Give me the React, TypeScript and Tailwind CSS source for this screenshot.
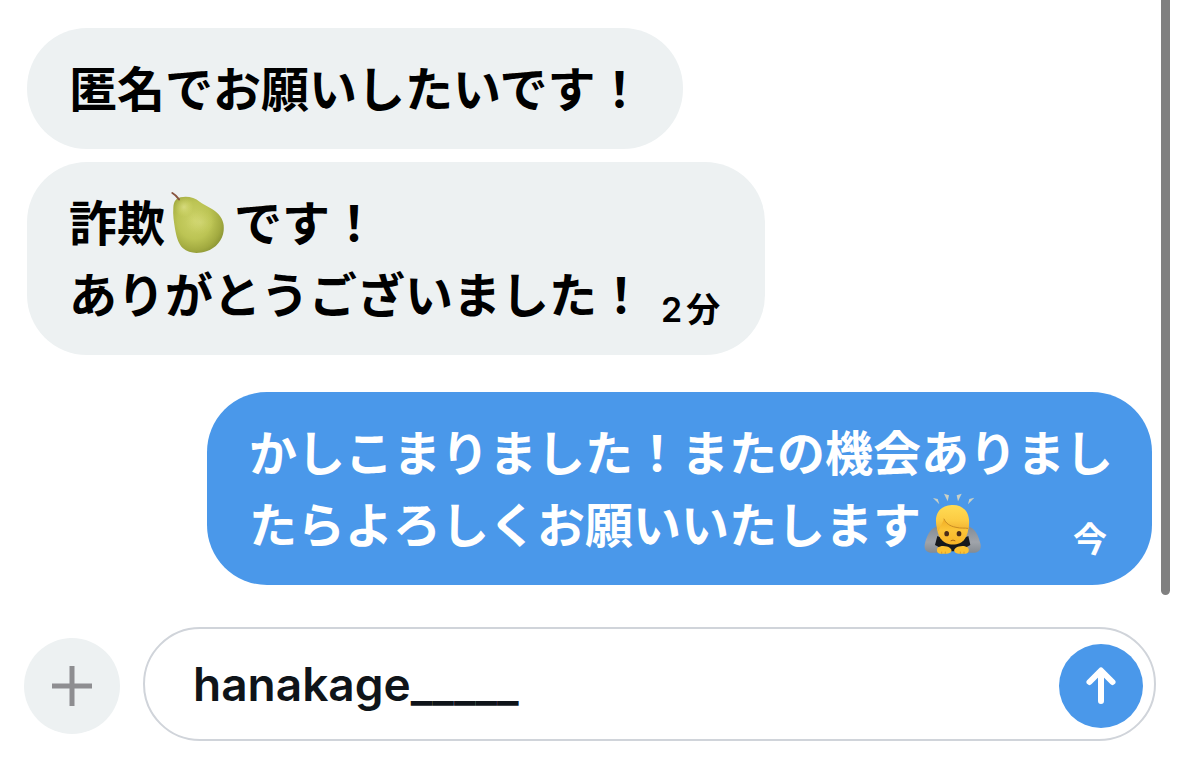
import React, { useState } from 'react';

// --- Emoji drawings ---

const PearEmoji = () => (
  <svg role="img" aria-label="pear" viewBox="30 15 171 192" className="-mt-1.5 mr-[7px] mb-1.5 ml-[5px] inline-block h-16 w-[57px] align-middle">
    <defs>
      <radialGradient id="pearBody" cx="0.42" cy="0.42" r="0.66">
        <stop offset="0" stopColor="#ccd269" />
        <stop offset="0.5" stopColor="#bcc454" />
        <stop offset="0.8" stopColor="#a2aa40" />
        <stop offset="1" stopColor="#848f32" />
      </radialGradient>
      <radialGradient id="pearShine" cx="0.5" cy="0.5" r="0.5">
        <stop offset="0" stopColor="#e6e89a" stopOpacity="0.6" />
        <stop offset="1" stopColor="#dce070" stopOpacity="0" />
      </radialGradient>
    </defs>
    <path
      d="M62 37C82 32 104 38 119 50C136 62 155 68 171 83C186 97 194 114 191 137C188 165 168 189 139 199C115 207 86 206 69 190C54 175 49 154 45 131C42 111 38 91 40 67C41 50 48 40 62 37Z"
      fill="url(#pearBody)"
    />
    <ellipse cx="72" cy="66" rx="29" ry="30" fill="url(#pearShine)" />
    <ellipse cx="121" cy="112" rx="44" ry="36" fill="url(#pearShine)" opacity="0.5" />
    <path d="M37 24C46 29 51 35 57 43" fill="none" stroke="#87543f" strokeWidth="6" strokeLinecap="round" />
  </svg>
);

const BowEmoji = () => (
  <svg role="img" aria-label="person bowing" viewBox="38 25 174 188" className="-mt-1.5 mr-[5px] mb-1.5 ml-[3px] inline-block h-16 w-[58px] align-middle">
    <defs>
      <linearGradient id="bowHair" x1="0" y1="0" x2="0" y2="1">
        <stop offset="0" stopColor="#ffdc55" />
        <stop offset="0.6" stopColor="#fccb43" />
        <stop offset="1" stopColor="#f0b030" />
      </linearGradient>
      <linearGradient id="bowFace" x1="0" y1="0" x2="0" y2="1">
        <stop offset="0" stopColor="#eda51c" />
        <stop offset="0.5" stopColor="#fbc438" />
        <stop offset="1" stopColor="#f7b325" />
      </linearGradient>
      <linearGradient id="bowSleeve" x1="0" y1="0" x2="0" y2="1">
        <stop offset="0" stopColor="#828b96" />
        <stop offset="0.6" stopColor="#a0a4aa" />
        <stop offset="1" stopColor="#858b92" />
      </linearGradient>
    </defs>
    <g fill="#ccd1c4">
      <path d="M65 41L79 44L84 60Z" />
      <path d="M98 28L113 33L109 51Z" />
      <path d="M136 33L151 28L140 51Z" />
      <path d="M174 44L189 40L170 60Z" />
    </g>
    <path d="M80 125C58 131 47 150 40 181C38 201 50 206 69 205L96 204L112 160Z" fill="url(#bowSleeve)" />
    <path d="M168 125C190 131 201 150 208 181C210 201 198 206 179 205L152 204L136 160Z" fill="url(#bowSleeve)" />
    <path d="M78 155C92 165 157 165 171 155L177 182L143 201H106L71 182Z" fill="#17191c" />
    <path d="M76 112C75 146 86 168 105 177C116 182 133 182 145 177C164 168 173 144 172 112C160 84 88 84 76 112Z" fill="url(#bowFace)" />
    <path
      d="M77 130C66 92 84 64 121 62C160 60 181 90 171 134C164 131 150 133 134 129C114 125 104 117 98 104C94 116 87 124 82 140C79 138 78 134 77 130Z"
      fill="url(#bowHair)"
    />
    <path d="M98 104C104 117 114 125 134 129C150 133 160 130 169 132" fill="none" stroke="#c98d24" strokeWidth="3" strokeLinecap="round" />
    <g fill="#4b2c18">
      <ellipse cx="106" cy="148" rx="7" ry="8" />
      <ellipse cx="143" cy="148" rx="7" ry="8" />
    </g>
    <path d="M119 169Q125 165 131 169" fill="none" stroke="#a86516" strokeWidth="3" strokeLinecap="round" />
    <path d="M79 190C88 183 106 184 116 191C125 198 120 208 106 208H85C76 206 75 195 79 190Z" fill="#fcc232" />
    <path d="M170 190C161 183 143 184 133 191C124 198 129 208 143 208H164C173 206 174 195 170 190Z" fill="#fcc232" />
    <path d="M91 202V208M102 202V208M147 202V208M158 202V208" stroke="#d38a1d" strokeWidth="2" />
  </svg>
);

// --- Message bubble ---

type BubbleProps = {
  children: React.ReactNode;
  own?: boolean;
};

const Bubble = ({ children, own = false }: BubbleProps) => (
  <li
    className={`w-fit rounded-[60px] pt-[26px] pr-[39px] pb-[23px] pl-[42px] ${
      own ? 'mt-6 self-end bg-[#4a98ea] text-white' : 'bg-[#edf1f2] text-black'
    }`}
  >
    <div className="flex items-end text-[48px] leading-[72px] font-bold">{children}</div>
  </li>
);

// --- Chat screen ---

const App = () => {
  const [draft, setDraft] = useState('hanakage_____');

  return (
    <main className="min-h-screen bg-white font-['Inter','Noto_Sans_CJK_JP',sans-serif]" lang="ja">
      <section className="flex gap-[9px] pr-[9px] pl-[27px]">
        <ol className="flex flex-1 flex-col gap-[13px] pt-7 pb-[10px]">
          <Bubble>
            <p>匿名でお願いしたいです！</p>
          </Bubble>
          <Bubble>
            <p>
              詐欺
              <PearEmoji />
              です！
              <br />
              ありがとうございました！
            </p>
            <time className="mr-[6px] ml-4 flex gap-1 text-[34px] leading-[44px] font-semibold">
              <span>2</span>
              <span>分</span>
            </time>
          </Bubble>
          <Bubble own>
            <p>
              かしこまりました！またの機会ありまし
              <br />
              たらよろしくお願いいたします
              <BowEmoji />
              <time className="float-right mt-7 mr-[6px] text-[34px] leading-[44px] font-semibold">今</time>
            </p>
          </Bubble>
        </ol>
        <div className="w-[9px] rounded-b-full bg-[#808080]" />
      </section>

      <form className="mt-8 flex items-center gap-[23px] pr-[23px] pl-6" onSubmit={(e) => e.preventDefault()}>
        <button type="button" aria-label="追加" className="mt-1 flex size-24 shrink-0 items-center justify-center rounded-full bg-[#edf1f2]">
          <svg viewBox="0 0 40 40" className="size-10" stroke="#8e8e91" strokeWidth="5">
            <path d="M20 0V40M0 20H40" />
          </svg>
        </button>
        <div className="flex min-w-0 flex-1 items-center rounded-full border-2 border-[#d0d4da] py-[11px] pr-[11px] pl-12">
          <input
            aria-label="メッセージ"
            value={draft}
            onChange={(e) => setDraft(e.target.value)}
            className="h-[86px] min-w-0 flex-1 bg-transparent text-[46px] font-semibold text-[#0f1419] outline-none"
          />
          <button type="submit" aria-label="送信" className="mt-1 flex size-[84px] shrink-0 items-center justify-center rounded-full bg-[#4a98ea]">
            <svg viewBox="0 0 40 40" className="size-10" fill="none" stroke="#fff" strokeWidth="6" strokeLinecap="round" strokeLinejoin="round">
              <path d="M20 35V5M8.500 16L20 4.500L31.500 16" />
            </svg>
          </button>
        </div>
      </form>
    </main>
  );
};

export default App;
